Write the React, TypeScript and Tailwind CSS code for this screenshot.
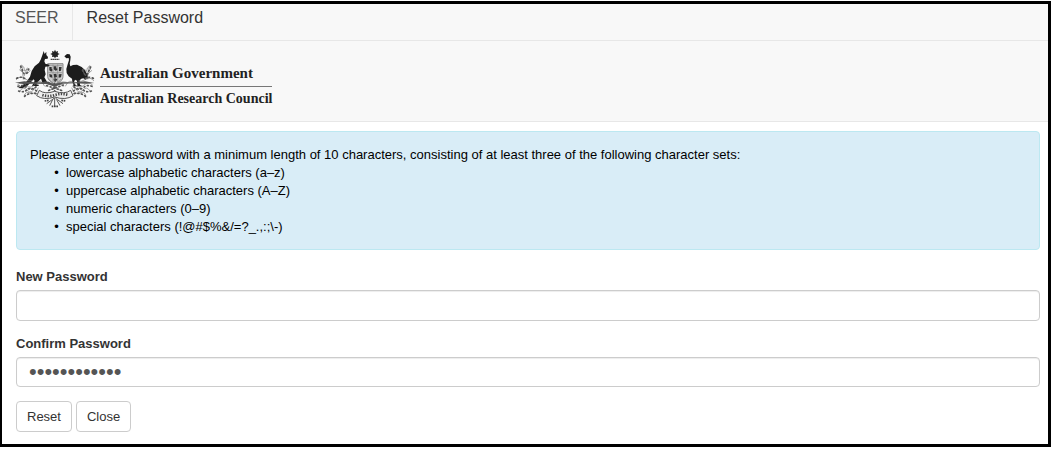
import { useState } from "react";

const rules = [
  "lowercase alphabetic characters (a–z)",
  "uppercase alphabetic characters (A–Z)",
  "numeric characters (0–9)",
  "special characters (!@#$%&/=?_.,:;\\-)",
];

function Crest() {
  return (
    <svg viewBox="15 12 240 180" className="h-[60px] w-20 shrink-0" role="img" aria-label="Commonwealth Coat of Arms">
      {/* star and wreath */}
      <path d="M135 14l3 6 6-2-1 6 6 3-6 3 1 6-6-1-3 5-3-5-6 1 1-6-6-3 6-3-1-6 6 2z" fill="#222" />
      <path d="M122 43h26" stroke="#444" strokeWidth="4" strokeDasharray="5 1" />

      {/* shield */}
      <path d="M113 56h46v38c0 13-13 20-23 24-9-4-23-11-23-24z" fill="#ccc" stroke="#888" strokeWidth="3" />
      <path d="M115 61h42M129 58v54M143 58v54M115 83h42" fill="none" stroke="#888" strokeWidth="2" />
      <g fill="#333">
        <path d="M118 66h7v5l3 4-4 5-6-4zM131 64h8v6l4 2-5 6-7-5zM147 66h8l-2 11-6 2z" />
        <path d="M118 87l8 2 1 9-8-2zM131 87l8-1 2 10-8 3zM146 88l9-1-2 10-7 1z" />
        <path d="M130 102l6-2 6 3-5 8z" />
      </g>

      {/* kangaroo */}
      <path
        d="M98 28l3-10 3 9 5-7v10l5 6-1 5-8 1-2 7 3 7 12 3v5l-12 1-2 10 3 13-4 9 8 13 8 1v4H98l-5-14-9 9-5 8 7 1v4H66l8-16-4-4-9 11-12 11-14 5-11-1 14-8 13-13 9-13 5-17 9-14 13-11 5-9z"
        fill="#1c1c1c"
      />
      {/* emu */}
      <path
        d="M163 34l8-7 8 1 3 7-1 11-2 10 2 8 8-4 12-1 14 7 10 10 8 14 2 13-6-4-2 6-7-5-6 1-5 5 1 14 8 4h-16l-1-17-6-3-3 8 4 8 7 4h-17l5-3-4-10-1-10-10-7-6-10-1-12 4-14 4-13-1-6-7 1z"
        fill="#1c1c1c"
      />

      {/* wattle stems on both sides */}
      <g fill="none" stroke="#777" strokeWidth="2">
        <path d="M18 104q12-13 26-3t24 6M40 82q-13-9-6-22 10 4 10 18M44 78q11-11 16-1-6 12-14 8M36 62l4 42M28 74l10 8M52 68l-10 26" />
        <path d="M252 108q-12-14-25-5t-24 5M232 82q14-8 8-20-11 5-10 18M230 78q-11-9-14-3l12 18M238 64l-7 40M246 76l-12 10" />
        <path d="M22 120q14-12 27 1t28-5 27 8M30 138q10-16 22-2t26-12M42 154q4-17 19-10t24-16" />
        <path d="M248 120q-14-12-27 1t-28-5-27 8M240 138q-10-16-22-2t-26-12M228 154q-4-17-19-10t-24-16" />
        <path d="M100 112q16-5 34 9 18-14 36-9M106 124q18-14 28 2 12-16 28-2M116 102l34 34M154 102l-34 34" />
      </g>
      <path d="M15 113l28-4 31 3h40l20 5 22-5h40l29-3 28 5-29 2-28-1-38 1-24 9-24-8-38-1-31 1z" fill="#555" />
      <g fill="none" stroke="#555" strokeWidth="5" strokeLinecap="round" strokeDasharray="3 8">
        <path d="M20 100q18-8 28 4M32 64l10 22M56 72l-8 18M24 124q14-6 26 4t28-2M26 138q14 6 26-4t30 6M44 154q12-12 36-8" />
        <path d="M250 100q-18-8-28 4M242 66l-10 22M218 76l8 16M246 124q-14-6-26 4t-28-2M244 138q-14 6-26-4t-30 6M226 154q-12-12-36-8" />
        <path d="M110 122l50 16M160 120l-48 18M134 104v36" />
      </g>

      {/* scroll */}
      <path d="M88 136q16 13 46 3 30 10 48-3l7 16q-22 15-55 4-33 11-54-4z" fill="#eee" stroke="#555" strokeWidth="3" />
      <path d="M97 150q18 6 38 0t40 0" fill="none" stroke="#444" strokeWidth="8" strokeDasharray="4 4" />
      <path d="M134 158v28M132 160l-22 16M137 160l22 16M128 164l-9 18M140 164l10 18" fill="none" stroke="#555" strokeWidth="3" />
      <path d="M104 168l12-2M154 166l13 2M125 184h20" stroke="#444" strokeWidth="5" strokeDasharray="5 2" />
    </svg>
  );
}

export default function App() {
  const [password, setPassword] = useState("");
  const [confirm, setConfirm] = useState("abcdefghijkl");

  const inputClass =
    "block w-full rounded border border-[#ccc] bg-white px-3 text-[22px] text-[#555] shadow-[inset_0_1px_1px_rgba(0,0,0,0.075)] outline-none focus:border-[#66afe9]";
  const buttonClass =
    "h-[31px] rounded border border-[#ccc] bg-white px-2.5 hover:bg-[#e6e6e6]";

  return (
    <div className="bg-white pt-px pr-px font-['Liberation_Sans',Arial,sans-serif] text-[13px] leading-[18px] text-[#333]">
      <div className="border-3 border-l-2 border-black pb-3">
        <nav className="flex h-[37px] border-b border-[#e7e7e7] bg-[#f8f8f8] text-base">
          <a href="#" className="border-r border-[#e7e7e7] px-[13px] pt-0.5 text-[#555]">
            SEER
          </a>
          <a href="#" className="pt-0.5 pl-3.5 text-[#333]">
            Reset Password
          </a>
        </nav>

        <header className="flex h-[81px] items-start border-b border-[#e7e7e7] bg-[#f8f8f8] pt-2 pl-[13px]">
          <Crest />
          <div className="ml-[5px] pt-[15px] font-['Liberation_Serif',serif] font-bold text-[#222]">
            <div className="border-b border-[#777] pb-1 text-[15px] leading-[18px]">Australian Government</div>
            <div className="pt-[3px] text-sm leading-[18px]">Australian Research Council</div>
          </div>
        </header>

        <main className="pt-[9px] pr-2 pl-3.5">
          <div className="rounded border border-[#bce8f1] bg-[#d9edf7] px-[13px] pt-3.5 pb-[13px] text-black">
            <p>
              Please enter a password with a minimum length of 10 characters, consisting of at least three of the
              following character sets:
            </p>
            <ul className="list-['•__'] pl-9">
              {rules.map((rule) => (
                <li key={rule}>{rule}</li>
              ))}
            </ul>
          </div>

          <form onSubmit={(e) => e.preventDefault()}>
            <label htmlFor="new-password" className="mt-[18px] mb-1 block font-bold">
              New Password
            </label>
            <input
              id="new-password"
              type="password"
              value={password}
              onChange={(e) => setPassword(e.target.value)}
              className={`${inputClass} h-[31px]`}
            />

            <label htmlFor="confirm-password" className="mt-3.5 mb-1 block font-bold">
              Confirm Password
            </label>
            <input
              id="confirm-password"
              type="password"
              value={confirm}
              onChange={(e) => setConfirm(e.target.value)}
              className={`${inputClass} h-[30px]`}
            />

            <div className="mt-3.5 flex gap-1">
              <button type="submit" className={buttonClass}>
                Reset
              </button>
              <button type="button" className={buttonClass}>
                Close
              </button>
            </div>
          </form>
        </main>
      </div>
    </div>
  );
}
